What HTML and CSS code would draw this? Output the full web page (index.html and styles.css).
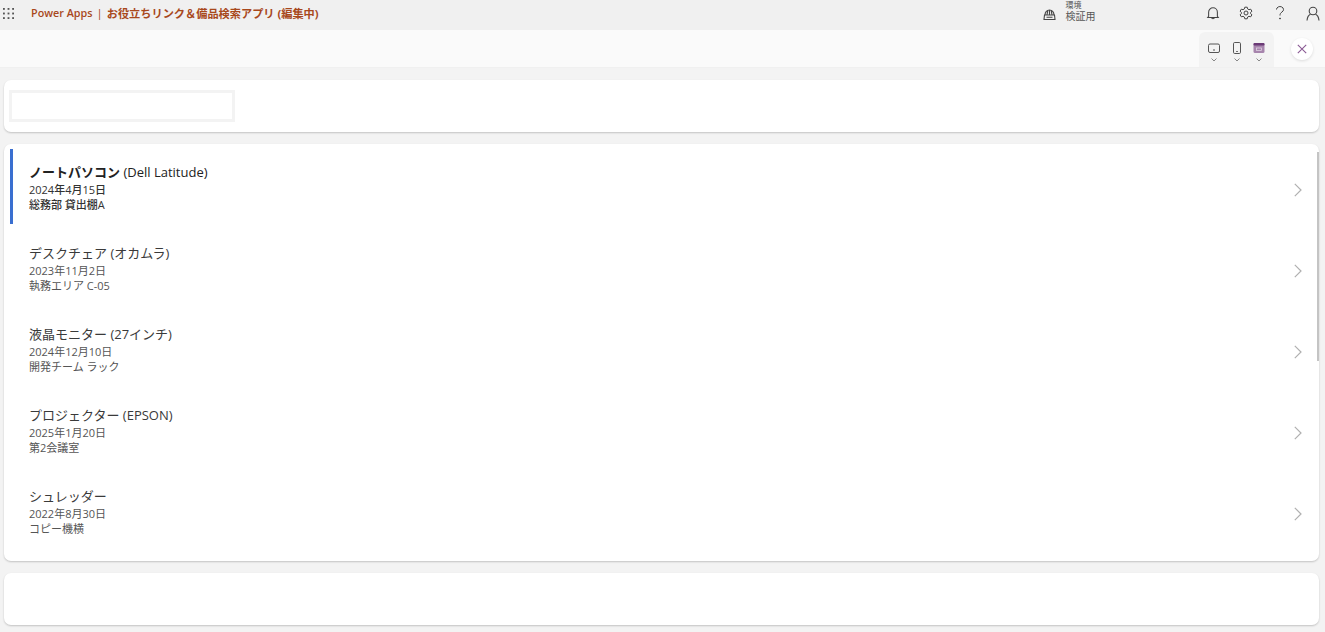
FILE: index.html
```html
<!DOCTYPE html>
<html lang="ja">
<head>
  <meta charset="UTF-8" />
  <title>お役立ちリンク＆備品検索アプリ</title>
  <link rel="stylesheet" href="styles.css">
</head>
<body>

  <header class="topbar">
    <svg class="waffle" width="11" height="11" viewBox="0 0 12 12" fill="#555">
      <rect x="0" y="0" width="2" height="2"/><rect x="5" y="0" width="2" height="2"/><rect x="10" y="0" width="2" height="2"/>
      <rect x="0" y="5" width="2" height="2"/><rect x="5" y="5" width="2" height="2"/><rect x="10" y="5" width="2" height="2"/>
      <rect x="0" y="10" width="2" height="2"/><rect x="5" y="10" width="2" height="2"/><rect x="10" y="10" width="2" height="2"/>
    </svg>
    <div class="app-title">
      <span class="brand">Power Apps</span>
      <span class="sep">|</span>
      <span class="app-name">お役立ちリンク＆備品検索アプリ (編集中)</span>
    </div>
    <div class="env">
      <svg width="13" height="13" viewBox="0 0 13 13" fill="none" stroke="#444" stroke-width="1.1">
        <path d="M2 7a4.500 5 0 0 1 9 0"/>
        <path d="M4.800 2.400 4 7M8.200 2.400 9 7M6.500 2v5"/>
        <path d="M1 7h11M1.500 7 1 11.500h11L11.500 7M3.500 9.300h6"/>
      </svg>
      <div class="env-text">
        <span class="env-label">環境</span>
        <span class="env-name">検証用</span>
      </div>
    </div>
    <div class="top-icons">
      <svg width="14" height="15" viewBox="-1 -1 16 17" fill="none" stroke="#444" stroke-width="1.200">
        <path d="M2 10.800V6a5 5 0 0 1 10 0v4.800l1 1.200H1z"/>
        <path d="M5.200 12.200a1.900 1.900 0 0 0 3.600 0"/>
      </svg>
      <svg width="14" height="14" viewBox="0 0 14 14" fill="none" stroke="#444" stroke-width="1">
        <path d="M5.800 1.200h2.400l.4 1.700 1.400.8 1.700-.5 1.200 2-1.300 1.200v1.200l1.300 1.200-1.200 2-1.700-.5-1.400.8-.4 1.700H5.800l-.4-1.700-1.400-.8-1.700.5-1.200-2 1.300-1.200V6.400L1.100 5.200l1.200-2 1.700.5 1.400-.8z"/>
        <circle cx="7" cy="7" r="2"/>
      </svg>
      <svg width="14" height="14" viewBox="-2 0 14 14" fill="none" stroke="#444" stroke-width="1">
        <path d="M1.500 3.500a3.500 3 0 1 1 5.500 2.500C5.600 7 5 7.800 5 9.500"/>
        <circle cx="5" cy="12.500" r=".5" fill="#444"/>
      </svg>
      <svg width="14" height="15" viewBox="0 0 14 15" fill="none" stroke="#444" stroke-width="1.1">
        <circle cx="7" cy="5" r="3.800"/>
        <path d="M1 14.500c.3-3 1.800-5.500 3.500-6.200M13 14.500c-.3-3-1.800-5.500-3.500-6.200"/>
      </svg>
    </div>
  </header>

  <div class="subbar">
    <div class="device-group">
      <div class="device">
        <svg width="12" height="12" viewBox="0 -1.500 12 12" fill="none" stroke="#555" stroke-width="1">
          <rect x=".5" y=".5" width="11" height="8.500" rx="1.500"/>
          <path d="M5 6.500h2"/>
        </svg>
        <svg class="caret" width="6" height="4" viewBox="0 0 6 4" fill="none" stroke="#888" stroke-width="1"><path d="M.5 .5 3 3 5.500 .5"/></svg>
      </div>
      <div class="device">
        <svg width="12" height="12" viewBox="-2 0 12 12" fill="none" stroke="#555" stroke-width="1">
          <rect x=".5" y=".5" width="7" height="11" rx="1.200"/>
          <path d="M3.200 9.500h1.600"/>
        </svg>
        <svg class="caret" width="6" height="4" viewBox="0 0 6 4" fill="none" stroke="#888" stroke-width="1"><path d="M.5 .5 3 3 5.500 .5"/></svg>
      </div>
      <div class="device">
        <svg width="12" height="12" viewBox="-.5 -1 12 12">
          <rect width="11" height="10" rx="1.500" fill="#a785ad"/>
          <rect width="11" height="2.500" rx="1" fill="#6b3a76"/>
          <rect x="3" y="5" width="5" height="2.500" fill="none" stroke="#e6dbe8" stroke-width=".7"/>
        </svg>
        <svg class="caret" width="6" height="4" viewBox="0 0 6 4" fill="none" stroke="#888" stroke-width="1"><path d="M.5 .5 3 3 5.500 .5"/></svg>
      </div>
    </div>
    <button class="close-btn">
      <svg width="10" height="10" viewBox="0 0 10 10" fill="none" stroke="#8a5a94" stroke-width="1.100"><path d="M.8 .8l8.400 8.400M9.200 .8 .8 9.200"/></svg>
    </button>
  </div>

  <main class="content">
    <section class="card search-card">
      <div class="search-box"></div>
    </section>

    <section class="card list-card">
      <div class="scroll-thumb"></div>

      <div class="row selected">
        <div class="row-text">
          <div class="row-title"><b>ノートパソコン</b> (Dell Latitude)</div>
          <div class="row-sub">2024年4月15日</div>
          <div class="row-sub">総務部 貸出棚A</div>
        </div>
        <svg class="chev" width="8" height="14" viewBox="0 0 8 14" fill="none" stroke="#b0b0b0" stroke-width="1.200"><path d="M.8 .8 7 7 .8 13.200"/></svg>
      </div>

      <div class="row">
        <div class="row-text">
          <div class="row-title">デスクチェア (オカムラ)</div>
          <div class="row-sub">2023年11月2日</div>
          <div class="row-sub">執務エリア C-05</div>
        </div>
        <svg class="chev" width="8" height="14" viewBox="0 0 8 14" fill="none" stroke="#b0b0b0" stroke-width="1.200"><path d="M.8 .8 7 7 .8 13.200"/></svg>
      </div>

      <div class="row">
        <div class="row-text">
          <div class="row-title">液晶モニター (27インチ)</div>
          <div class="row-sub">2024年12月10日</div>
          <div class="row-sub">開発チーム ラック</div>
        </div>
        <svg class="chev" width="8" height="14" viewBox="0 0 8 14" fill="none" stroke="#b0b0b0" stroke-width="1.200"><path d="M.8 .8 7 7 .8 13.200"/></svg>
      </div>

      <div class="row">
        <div class="row-text">
          <div class="row-title">プロジェクター (EPSON)</div>
          <div class="row-sub">2025年1月20日</div>
          <div class="row-sub">第2会議室</div>
        </div>
        <svg class="chev" width="8" height="14" viewBox="0 0 8 14" fill="none" stroke="#b0b0b0" stroke-width="1.200"><path d="M.8 .8 7 7 .8 13.200"/></svg>
      </div>

      <div class="row">
        <div class="row-text">
          <div class="row-title">シュレッダー</div>
          <div class="row-sub">2022年8月30日</div>
          <div class="row-sub">コピー機横</div>
        </div>
        <svg class="chev" width="8" height="14" viewBox="0 0 8 14" fill="none" stroke="#b0b0b0" stroke-width="1.200"><path d="M.8 .8 7 7 .8 13.200"/></svg>
      </div>
    </section>

    <section class="card footer-card"></section>
  </main>

</body>
</html>
```

FILE: styles.css
```css
html, body {
  height: 100%;
}
body {
  font-family: 'Open Sans', 'Noto Sans CJK JP', sans-serif;
  background-color: #f3f3f3;
  margin: 0;
  color: #333;
  overflow: hidden;
}
.topbar {
  display: flex;
  align-items: center;
  height: 30px;
  box-sizing: border-box;
  background-color: #f0f0f0;
  padding: 0 0 4px 3px;
}
.waffle {
  margin-right: 17px;
}
.app-title {
  display: flex;
  gap: 4px;
  font-size: 11.2px;
  color: #a8481c;
}
.brand {
  font-size: 10.8px;
  font-weight: 600;
}
.app-name {
  font-weight: 700;
}
.env {
  display: flex;
  align-items: center;
  gap: 10px;
  margin: 3px 110px 0 auto;
}
.env-text {
  display: flex;
  flex-direction: column;
  color: #555;
}
.env-label {
  font-size: 8px;
  line-height: 9px;
  margin-top: -6px;
}
.env-name {
  font-size: 10px;
  line-height: 14px;
}
.top-icons {
  display: flex;
  align-items: center;
  gap: 19.5px;
  margin-right: 5px;
}
.subbar {
  display: flex;
  justify-content: flex-end;
  align-items: center;
  height: 38px;
  background-color: #fafafa;
  border-bottom: 1px solid #f0f0f0;
  box-sizing: border-box;
  padding-right: 12px;
}
.device-group {
  display: flex;
  align-self: flex-end;
  gap: 10.5px;
  height: 35px;
  padding: 0 9px;
  margin-right: 17px;
  background-color: #f3f3f3;
  border-radius: 6px 6px 0 0;
  box-sizing: border-box;
}
.device {
  display: flex;
  flex-direction: column;
  align-items: center;
  justify-content: flex-end;
  width: 12px;
  gap: 4px;
  padding-bottom: 5px;
}
.close-btn {
  width: 22px;
  height: 22px;
  padding: 0;
  border: none;
  border-radius: 50%;
  background-color: #fff;
  box-shadow: 0 1px 3px rgba(0,0,0,0.12);
  display: flex;
  align-items: center;
  justify-content: center;
}
.content {
  display: flex;
  flex-direction: column;
  gap: 12px;
  padding: 12px 6px 0 4px;
}
.card {
  background-color: #fff;
  border-radius: 7px;
  box-shadow: 0 1px 2px rgba(0,0,0,0.2);
}
.search-card {
  height: 52px;
  padding: 10px 5px;
  box-sizing: border-box;
}
.search-box {
  width: 226px;
  height: 32px;
  box-sizing: border-box;
  border: 3px solid #f3f3f3;
}
.footer-card {
  height: 52px;
}
.list-card {
  position: relative;
  height: 417px;
  padding-top: 5px;
  box-sizing: border-box;
}
.scroll-thumb {
  position: absolute;
  top: 8px;
  right: 0;
  width: 2px;
  height: 209px;
  background-color: #c4c4c4;
}
.row {
  display: flex;
  align-items: center;
  justify-content: space-between;
  height: 75px;
  margin: 0 0 6.2px 6px;
  box-sizing: border-box;
  padding: 0 17px 0 16px;
  border-left: 3px solid transparent;
}
.chev {
  margin-top: 6px;
}
.row.selected {
  border-left-color: #3a6fd0;
}
.row.selected .row-title {
  color: #222;
  font-weight: 500;
}
.row.selected .row-title b {
  font-weight: 600;
}
.row-title {
  font-size: 13px;
  line-height: 20px;
  color: #3a3a3a;
}
.row-sub {
  font-size: 11px;
  line-height: 15px;
  color: #555;
}
.row.selected .row-sub {
  color: #333;
  font-weight: 500;
}
```
